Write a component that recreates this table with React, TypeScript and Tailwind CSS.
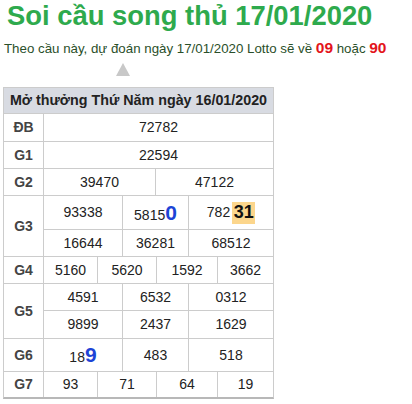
import React from "react";

const cellBase = "flex items-center justify-center border-r border-[#cccccc] text-[14px] text-[#222222]";

function Label({ text, h }: { text: string; h?: string }) {
  return (
    <div className={`flex w-[40px] shrink-0 items-center justify-center border-r border-[#cccccc] text-[14px] font-bold text-[#444444] ${h ?? ""}`}>
      {text}
    </div>
  );
}

function Three({ a, b, c, h, last }: { a: React.ReactNode; b: React.ReactNode; c: React.ReactNode; h: string; last?: boolean }) {
  return (
    <div className={`flex ${h} ${last ? "" : "border-b border-[#cccccc]"}`}>
      <div className={`${cellBase} w-[79px]`}>{a}</div>
      <div className={`${cellBase} w-[66px]`}>{b}</div>
      <div className="flex flex-1 items-center justify-center text-[14px] text-[#222222]">{c}</div>
    </div>
  );
}

function Four({ label, v }: { label: string; v: string[] }) {
  return (
    <>
      <Label text={label} />
      <div className={`${cellBase} w-[54px]`}>{v[0]}</div>
      <div className={`${cellBase} w-[59px]`}>{v[1]}</div>
      <div className={`${cellBase} w-[61px]`}>{v[2]}</div>
      <div className="flex flex-1 items-center justify-center text-[14px] text-[#222222]">{v[3]}</div>
    </>
  );
}

export default function App() {
  return (
    <div className="min-h-[404px] w-[412px] bg-white font-['Liberation_Sans',Arial,sans-serif]">
      <div className="pl-[7px] text-[27.4px] font-bold leading-[32px] text-[#2eaa4d]">Soi cầu song thủ 17/01/2020</div>
      <div className="mt-[6px] pl-[4px] text-[13.3px] leading-[20px] text-[#2a4f2a]">
        Theo cầu này, dự đoán ngày 17/01/2020 Lotto sẽ về{" "}
        <span className="text-[15.5px] font-bold text-[#e3141b]">09</span> hoặc{" "}
        <span className="text-[15.5px] font-bold text-[#e3141b]">90</span>
      </div>
      <div className="ml-[116px] mt-[4px] h-0 w-0 border-x-[7px] border-b-[13px] border-x-transparent border-b-[#c8c8c8]" />
      <div className="ml-[3px] mt-[11px] w-[271px] border-x border-t border-b-2 border-x-[#cccccc] border-t-[#cccccc] border-b-[#b8b8b8]">
        <div className="flex h-[26px] items-center justify-center border-b border-[#cccccc] bg-[#d8dbe2] text-[14.3px] font-bold text-[#222222]">
          Mở thưởng Thứ Năm ngày 16/01/2020
        </div>
        <div className="flex h-[28px] border-b border-[#cccccc]">
          <Label text="ĐB" />
          <div className="flex flex-1 items-center justify-center text-[14px] text-[#222222]">72782</div>
        </div>
        <div className="flex h-[27px] border-b border-[#cccccc]">
          <Label text="G1" />
          <div className="flex flex-1 items-center justify-center text-[14px] text-[#222222]">22594</div>
        </div>
        <div className="flex h-[27px] border-b border-[#cccccc]">
          <Label text="G2" />
          <div className={`${cellBase} w-[112px]`}>39470</div>
          <div className="flex flex-1 items-center justify-center text-[14px] text-[#222222]">47122</div>
        </div>
        <div className="flex border-b border-[#cccccc]">
          <Label text="G3" />
          <div className="flex flex-1 flex-col">
            <Three
              h="h-[34px]"
              a="93338"
              b={
                <span>
                  5815<span className="text-[21px] font-bold text-[#1d44d6]">0</span>
                </span>
              }
              c={
                <span className="flex items-center">
                  782
                  <span className="ml-[2px] flex h-[22px] w-[23px] items-center justify-center bg-[#fcd68c] text-[18px] font-bold text-[#111111]">31</span>
                </span>
              }
            />
            <Three h="h-[26px]" a="16644" b="36281" c="68512" last />
          </div>
        </div>
        <div className="flex h-[27px] border-b border-[#cccccc]">
          <Four label="G4" v={["5160", "5620", "1592", "3662"]} />
        </div>
        <div className="flex border-b border-[#cccccc]">
          <Label text="G5" />
          <div className="flex flex-1 flex-col">
            <Three h="h-[27px]" a="4591" b="6532" c="0312" />
            <Three h="h-[27px]" a="9899" b="2437" c="1629" last />
          </div>
        </div>
        <div className="flex h-[33px] border-b border-[#cccccc]">
          <Label text="G6" />
          <div className="flex flex-1">
            <div className={`${cellBase} w-[79px]`}>
              <span>
                18<span className="text-[21px] font-bold text-[#1d44d6]">9</span>
              </span>
            </div>
            <div className={`${cellBase} w-[66px]`}>483</div>
            <div className="flex flex-1 items-center justify-center text-[14px] text-[#222222]">518</div>
          </div>
        </div>
        <div className="flex h-[25px]">
          <Four label="G7" v={["93", "71", "64", "19"]} />
        </div>
      </div>
    </div>
  );
}
